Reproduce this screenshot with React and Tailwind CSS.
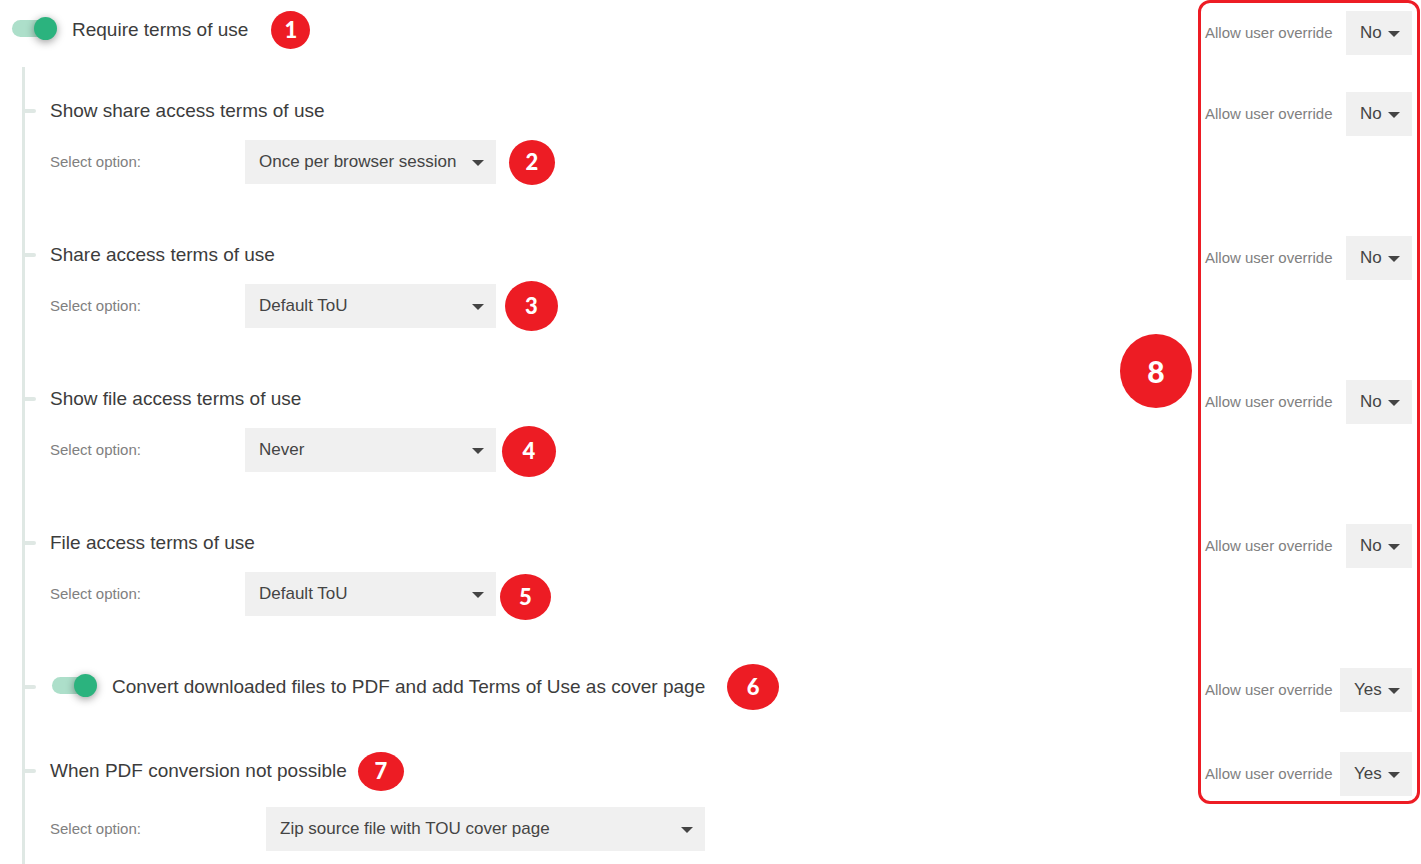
import React, { useState } from 'react'

const sections = [
    {
        id: 'show_share',
        title: 'Show share access terms of use',
        options: ['Once per browser session', 'Always', 'Never'],
        badge: { label: '2', className: 'ml-[13px] w-[46px] h-[45px]' }
    },
    {
        id: 'share',
        title: 'Share access terms of use',
        options: ['Default ToU', 'Custom ToU'],
        badge: { label: '3', className: 'ml-[9px] w-[53px] h-[50px]' }
    },
    {
        id: 'show_file',
        title: 'Show file access terms of use',
        options: ['Never', 'Always', 'Once per browser session'],
        badge: { label: '4', className: 'ml-[6px] w-[54px] h-[51px] mt-[2px]' }
    },
    {
        id: 'file',
        title: 'File access terms of use',
        options: ['Default ToU', 'Custom ToU'],
        badge: { label: '5', className: 'ml-1 w-[51px] h-[46px] mt-[6px]' }
    }
]

function Badge({ label, className }) {
    return (
        <span className={`flex shrink-0 items-center justify-center rounded-[50%] bg-[#ed1c24] font-['Lato','Open_Sans',sans-serif] font-black leading-none text-white ${className}`}>
            {label}
        </span>
    )
}

function Dropdown({ id, options, className }) {
    const [value, setValue] = useState(options[0])

    return (
        <div className={`relative h-11 shrink-0 ${className}`}>
            <select id={id} value={value} onChange={e => setValue(e.target.value)} className="h-full w-full appearance-none bg-[#f0f0f0] pl-[14px] pr-7 text-[17px] text-[#444]">
                {options.map(o => (
                    <option key={o}>{o}</option>
                ))}
            </select>
            <svg viewBox="0 0 12 6" className="pointer-events-none absolute right-3 top-5 h-[6px] w-3" fill="#444">
                <path d="M0 0h12L6 6z" />
            </svg>
        </div>
    )
}

function Toggle({ id }) {
    const [on, setOn] = useState(true)

    return (
        <span className="relative mb-1 flex h-[23px] w-[45px] shrink-0 items-center">
            <input id={id} type="checkbox" role="switch" checked={on} onChange={e => setOn(e.target.checked)} className="peer h-[17px] w-[43px] appearance-none rounded-full bg-gray-300 checked:bg-[#addfca]" />
            <span className="pointer-events-none absolute left-0 size-[23px] rounded-full bg-white shadow-[0_2px_8px_rgba(0,0,0,0.4)] peer-checked:left-[22px] peer-checked:bg-[#2bb37e]" />
        </span>
    )
}

function Override({ id, value }) {
    const yes = value === 'Yes'

    return (
        <div className="flex w-[207px] shrink-0 items-center justify-between">
            <label htmlFor={id} className="whitespace-nowrap text-[15px] text-[#808080]">Allow user override</label>
            <Dropdown id={id} options={yes ? ['Yes', 'No'] : ['No', 'Yes']} className={yes ? 'w-[72px]' : 'w-[66px]'} />
        </div>
    )
}

// heading line of one setting, with the override on the right
function SettingRow({ id, override, children }) {
    return (
        <div className="flex h-11 items-center justify-between pr-[9px]">
            <div className="flex items-center pb-1.5">{children}</div>
            <Override id={`${id}_override`} value={override} />
        </div>
    )
}

function Tick() {
    return <span className="mr-[14px] h-1 w-[11px] shrink-0 rounded-r-sm bg-[#dfe8e4]" />
}

function OptionRow({ id, options, labelWidth, selectWidth, children }) {
    return (
        <div className="flex h-11 items-center pl-[25px]">
            <label htmlFor={id} className={`shrink-0 text-[15px] text-[#808080] ${labelWidth}`}>Select option:</label>
            <Dropdown id={id} options={options} className={selectWidth} />
            {children}
        </div>
    )
}

export default function App() {
    return (
        <div className="relative flex min-h-screen flex-col bg-white pt-[11px] font-['Liberation_Sans',Arial,sans-serif]">
            <SettingRow id="require" override="No">
                <div className="flex items-center gap-[15px] pl-3">
                    <Toggle id="require" />
                    <label htmlFor="require" className="text-[19px] text-[#3c3c3c]">Require terms of use</label>
                </div>
                <Badge label="1" className="ml-[23px] h-[38px] w-[39px] text-[22px]" />
            </SettingRow>

            <div className="ml-[22px] mt-3 flex-1 border-l-[3px] border-[#dfe8e4] pb-3 pt-[25px]">
                {sections.map(s => (
                    <section key={s.id} className="mb-[52px]">
                        <SettingRow id={s.id} override="No">
                            <Tick />
                            <h2 className="text-[19px] text-[#3c3c3c]">{s.title}</h2>
                        </SettingRow>
                        <div className="mt-1">
                            <OptionRow id={s.id} options={s.options} labelWidth="w-[195px]" selectWidth="w-[251px]">
                                <Badge label={s.badge.label} className={`text-[22px] ${s.badge.className}`} />
                            </OptionRow>
                        </div>
                    </section>
                ))}

                <section className="mb-10">
                    <SettingRow id="convert" override="Yes">
                        <Tick />
                        <div className="flex items-center gap-[15px] pl-[2px]">
                            <Toggle id="convert" />
                            <label htmlFor="convert" className="text-[19px] text-[#3c3c3c]">
                                Convert downloaded files to PDF and add Terms of Use as cover page
                            </label>
                        </div>
                        <Badge label="6" className="ml-[22px] h-[46px] w-[52px] text-[22px]" />
                    </SettingRow>
                </section>

                <section>
                    <SettingRow id="not_possible" override="Yes">
                        <Tick />
                        <h2 className="text-[19px] text-[#3c3c3c]">When PDF conversion not possible</h2>
                        <Badge label="7" className="ml-[11px] h-[39px] w-[46px] text-[22px]" />
                    </SettingRow>
                    <div className="mt-[11px]">
                        <OptionRow id="not_possible" options={['Zip source file with TOU cover page', 'Block download']} labelWidth="w-[216px]" selectWidth="w-[439px]" />
                    </div>
                </section>
            </div>

            {/* callout around the override column */}
            <div className="pointer-events-none absolute right-px top-0 h-[804px] w-[222px] rounded-xl border-[3px] border-[#ed1c24]" />
            <div className="pointer-events-none absolute right-[229px] top-[334px]">
                <Badge label="8" className="h-[74px] w-[72px] text-3xl" />
            </div>
        </div>
    )
}
